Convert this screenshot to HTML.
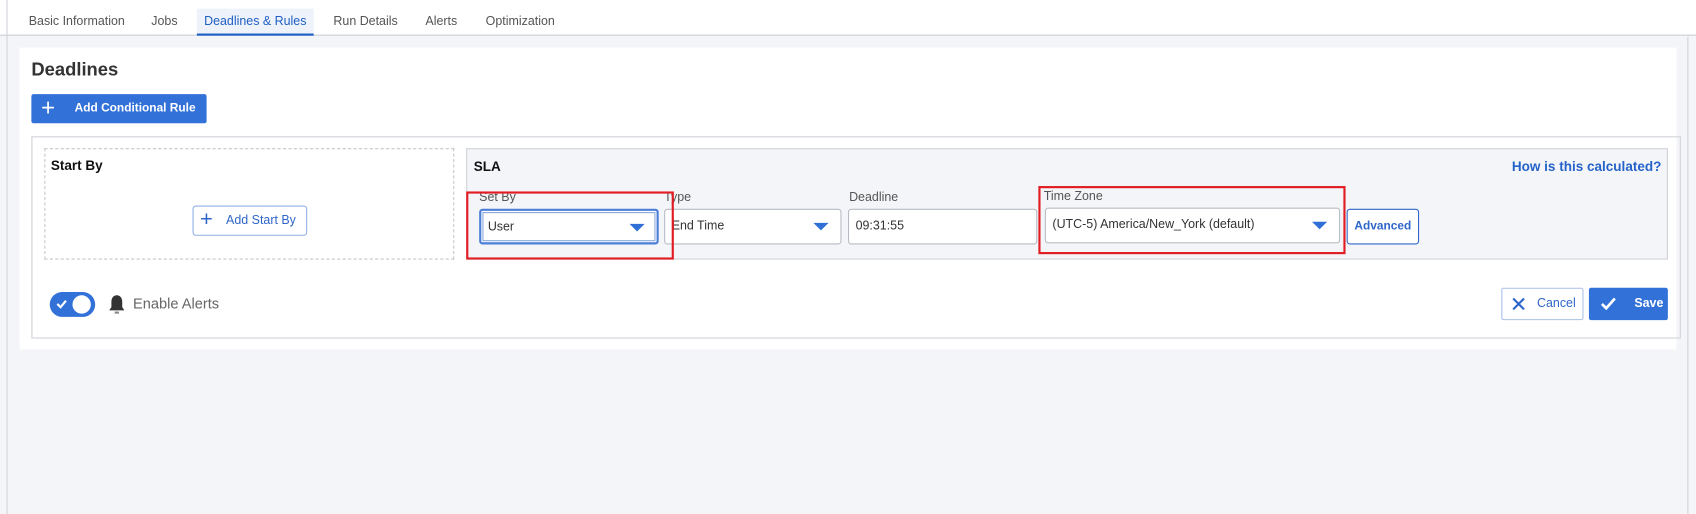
<!DOCTYPE html>
<html><head><meta charset="utf-8"><style>
*{box-sizing:border-box;margin:0;padding:0}
html,body{width:1696px;height:514px;overflow:hidden;background:#f4f5f8}
#w{position:absolute;left:0;top:0;width:1568px;height:475px;transform:scale(1.08163);transform-origin:0 0;font-family:"Liberation Sans",sans-serif;background:#f4f5f8}
.a{position:absolute;white-space:nowrap}
.tab{position:absolute;top:8px;height:25px;font-size:11.5px;color:#555;line-height:25px;white-space:nowrap;text-align:center}
.lbl{position:absolute;top:177px;font-size:11.5px;color:#555}
.inp{position:absolute;top:193px;height:33px;background:#fff;border:1px solid #b8bcc4;border-radius:3px;font-size:11.5px;color:#333;line-height:31px;padding-left:6px;white-space:nowrap}
.tri{position:absolute;right:11px;top:12px;width:0;height:0;border-left:7px solid transparent;border-right:7px solid transparent;border-top:7px solid #2f6fd6}
.red{position:absolute;border:2px solid #e11d24}
</style></head><body><div id="w">
<div class="a" style="left:0;top:0;width:1568px;height:33px;background:#fff;border-bottom:1px solid #c8ccd2"></div>
<div class="a" style="left:6px;top:0;width:1px;height:475px;background:#d0d3d8"></div>
<div class="tab" style="left:18px;width:106px">Basic Information</div>
<div class="tab" style="left:137px;width:30px">Jobs</div>
<div class="tab" style="left:182px;width:108px;background:#eef2fa;color:#1f5fc4;border-bottom:2px solid #1f5fc4">Deadlines &amp; Rules</div>
<div class="tab" style="left:302px;width:72px">Run Details</div>
<div class="tab" style="left:386px;width:44px">Alerts</div>
<div class="tab" style="left:441px;width:80px">Optimization</div>
<div class="a" style="left:1560px;top:34px;width:1px;height:441px;background:#d0d3d8"></div>
<div class="a" style="left:18px;top:44px;width:1532px;height:279px;background:#fff"></div>
<div class="a" style="left:29px;top:55px;font-size:17px;font-weight:bold;color:#333">Deadlines</div>
<div class="a" style="left:29px;top:87px;width:162px;height:27px;background:#3171d8;border-radius:2px;color:#fff;font-size:11px;font-weight:bold;line-height:27px">
<span class="a" style="left:9px;top:0;font-size:22px;font-weight:normal;line-height:25px">+</span><span class="a" style="left:40px">Add Conditional Rule</span></div>
<div class="a" style="left:29px;top:126px;width:1525px;height:187px;border:1px solid #cfd2d8"></div>
<div class="a" style="left:41px;top:137px;width:379px;height:103px;border:1px dashed #c4c7cc"></div>
<div class="a" style="left:47px;top:146px;font-size:12.5px;font-weight:bold;color:#111">Start By</div>
<div class="a" style="left:178px;top:190px;width:106px;height:28px;border:1px solid #8fb0e6;border-radius:3px;color:#2f66c9;font-size:11.5px;line-height:26px">
<span class="a" style="left:6px;top:0;font-size:20px;line-height:24px">+</span><span class="a" style="left:30px">Add Start By</span></div>
<div class="a" style="left:431px;top:137px;width:1111px;height:103px;background:#f4f5f8;border:1px solid #cfd2d8"></div>
<div class="a" style="left:438px;top:147px;font-size:12.5px;font-weight:bold;color:#111">SLA</div>
<div class="a" style="right:32px;top:147px;font-size:12.5px;color:#2563c9;font-weight:bold">How is this calculated?</div>
<div class="lbl" style="left:443px">Set By</div>
<div class="lbl" style="left:614px">Type</div>
<div class="lbl" style="left:785px">Deadline</div>
<div class="lbl" style="left:965px;top:176px">Time Zone</div>
<div class="inp" style="left:443px;width:166px;border:2px solid #4b7fd8;box-shadow:inset 0 0 0 1px #fff,inset 0 0 0 2px #8aa9dc">User<div class="tri"></div></div>
<div class="inp" style="left:614px;width:164px">End Time<div class="tri"></div></div>
<div class="inp" style="left:784px;width:175px">09:31:55</div>
<div class="inp" style="left:966px;width:273px;top:192px">(UTC-5) America/New_York (default)<div class="tri"></div></div>
<div class="a" style="left:1245px;top:193px;width:67px;height:33px;border:1px solid #2f66c9;border-radius:3px;background:#fff;color:#2f66c9;font-size:11px;font-weight:bold;text-align:center;line-height:31px">Advanced</div>
<div class="red" style="left:431px;top:177px;width:192px;height:63px"></div>
<div class="red" style="left:960px;top:172px;width:284px;height:63px"></div>
<div class="a" style="left:46px;top:270px;width:42px;height:23px;background:#3171d8;border-radius:12px"></div>
<div class="a" style="left:67px;top:273px;width:17px;height:17px;background:#fff;border-radius:50%"></div>
<svg class="a" style="left:50px;top:274px" width="14" height="14" viewBox="0 0 14 14"><path d="M3 7l3 3 5-6" stroke="#fff" stroke-width="2" fill="none"/></svg>
<svg class="a" style="left:100px;top:272px" width="16" height="20" viewBox="0 0 16 20"><path d="M8 1c-3 0-5 2.5-5 6v5l-2 3h14l-2-3V7c0-3.5-2-6-5-6z" fill="#333"/><rect x="6" y="16" width="4" height="2" fill="#888"/></svg>
<div class="a" style="left:123px;top:273px;font-size:13.5px;color:#666">Enable Alerts</div>
<div class="a" style="left:1388px;top:266px;width:76px;height:30px;border:1px solid #a9c0e8;border-radius:2px;background:#fff;color:#2f66c9;font-size:11.5px;line-height:28px">
<svg class="a" style="left:9px;top:8px" width="12" height="12" viewBox="0 0 12 12"><path d="M1 1l10 10M11 1L1 11" stroke="#2f66c9" stroke-width="2"/></svg><span class="a" style="left:32px">Cancel</span></div>
<div class="a" style="left:1469px;top:266px;width:73px;height:30px;background:#3171d8;border-radius:2px;color:#fff;font-size:11.5px;font-weight:bold;line-height:30px">
<svg class="a" style="left:10px;top:8px" width="16" height="14" viewBox="0 0 16 14"><path d="M2 7l4 4 8-9" stroke="#fff" stroke-width="2.5" fill="none"/></svg><span class="a" style="left:42px">Save</span></div>
</div></body></html>
